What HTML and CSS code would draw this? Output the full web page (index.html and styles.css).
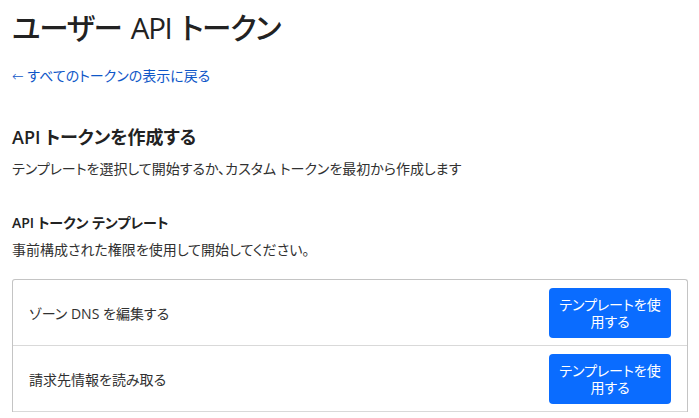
FILE: index.html
```html
<!DOCTYPE html>
<html lang="ja">
<head>
<meta charset="utf-8">
<link rel="stylesheet" href="styles.css">
</head>
<body>
<main class="page">
  <h1 class="title">ユーザー API トークン</h1>
  <a class="back" href="#"><span class="arrow">←</span> すべてのトークンの表示に戻る</a>
  <section class="create">
    <h2 class="h2">API トークンを作成する</h2>
    <p class="desc desc-lead">テンプレートを選択して開始するか、カスタム トークンを最初から作成します</p>
  </section>
  <section class="templates">
    <h3 class="h3">API トークン テンプレート</h3>
    <p class="desc">事前構成された権限を使用して開始してください。</p>
    <div class="table">
      <div class="row">
        <span class="name">ゾーン DNS を編集する</span>
        <button class="btn">テンプレートを使用する</button>
      </div>
      <div class="row">
        <span class="name">請求先情報を読み取る</span>
        <button class="btn">テンプレートを使用する</button>
      </div>
    </div>
  </section>
</main>
</body>
</html>
```
FILE: styles.css
```css
html, body {
  margin: 0;
  padding: 0;
  background: #ffffff;
}
body {
  font-family: "Open Sans", "Noto Sans CJK JP", sans-serif;
  font-feature-settings: "palt";
  color: #313131;
}
.page {
  padding: 0 11px 0 12px;
}
.title {
  margin: 0;
  padding-top: 8px;
  font-size: 29.5px;
  line-height: 40px;
  font-weight: 500;
  letter-spacing: -1.3px;
  word-spacing: 3px;
  color: #222222;
}
.back {
  display: inline-block;
  margin-top: 18px;
  font-size: 14px;
  line-height: 20px;
  color: #0f57c8;
  text-decoration: none;
}
.arrow {
  font-family: "DejaVu Sans", sans-serif;
  font-weight: 300;
}
.create {
  margin-top: 38px;
}
.h2 {
  margin: 0;
  font-size: 18px;
  line-height: 26px;
  font-weight: 600;
  color: #222222;
}
.desc {
  margin: 6px 0 0;
  font-size: 14px;
  line-height: 20px;
  color: #313131;
}
.desc-lead {
  margin-top: 9px;
}
.templates {
  margin-top: 33px;
}
.h3 {
  margin: 0;
  font-size: 14px;
  line-height: 22px;
  font-weight: 600;
  color: #222222;
}
.table {
  margin-top: 19px;
  border: 1px solid #c4c4c4;
  border-bottom: none;
  border-radius: 3px 3px 0 0;
}
.row {
  display: flex;
  align-items: center;
  justify-content: space-between;
  height: 66px;
  padding: 0 16px;
  border-bottom: 1px solid #d9d9d9;
  box-sizing: border-box;
}
.name {
  font-size: 14px;
  color: #313131;
}
.btn {
  width: 122px;
  height: 50px;
  border: none;
  border-radius: 4px;
  background: #0a6cff;
  color: #ffffff;
  font-family: inherit;
  font-feature-settings: "palt";
  font-size: 14px;
  line-height: 17px;
  padding: 0 10px;
}
```
